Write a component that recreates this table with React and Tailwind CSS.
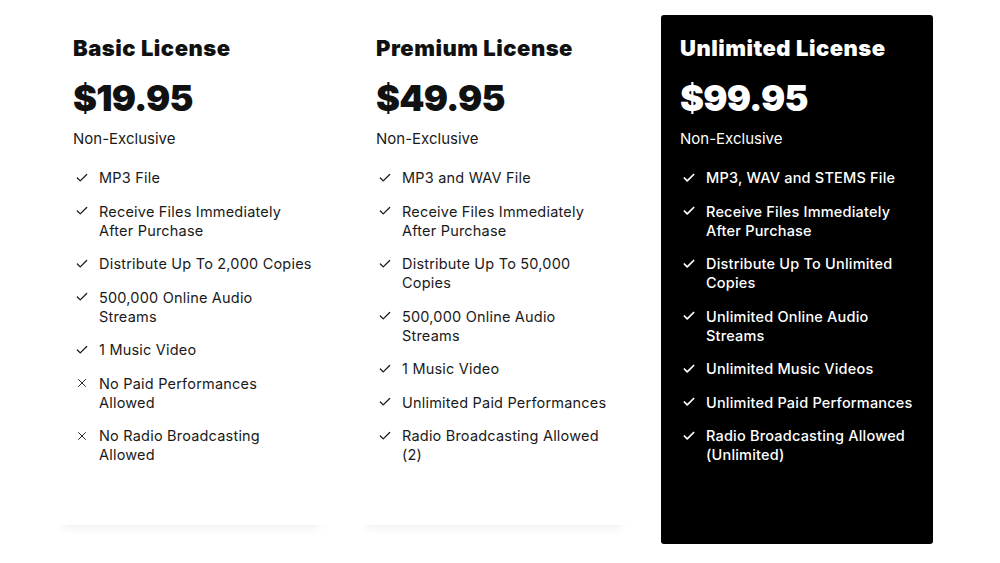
import { Check, X } from "lucide-react";

const plans = [
  {
    name: "Basic License",
    price: "$19.95",
    dark: false,
    items: [
      { ok: true, lines: ["MP3 File"] },
      { ok: true, lines: ["Receive Files Immediately", "After Purchase"] },
      { ok: true, lines: ["Distribute Up To 2,000 Copies"] },
      { ok: true, lines: ["500,000 Online Audio", "Streams"] },
      { ok: true, lines: ["1 Music Video"] },
      { ok: false, lines: ["No Paid Performances", "Allowed"] },
      { ok: false, lines: ["No Radio Broadcasting", "Allowed"] },
    ],
  },
  {
    name: "Premium License",
    price: "$49.95",
    dark: false,
    items: [
      { ok: true, lines: ["MP3 and WAV File"] },
      { ok: true, lines: ["Receive Files Immediately", "After Purchase"] },
      { ok: true, lines: ["Distribute Up To 50,000", "Copies"] },
      { ok: true, lines: ["500,000 Online Audio", "Streams"] },
      { ok: true, lines: ["1 Music Video"] },
      { ok: true, lines: ["Unlimited Paid Performances"] },
      { ok: true, lines: ["Radio Broadcasting Allowed", "(2)"] },
    ],
  },
  {
    name: "Unlimited License",
    price: "$99.95",
    dark: true,
    items: [
      { ok: true, lines: ["MP3, WAV and STEMS File"] },
      { ok: true, lines: ["Receive Files Immediately", "After Purchase"] },
      { ok: true, lines: ["Distribute Up To Unlimited", "Copies"] },
      { ok: true, lines: ["Unlimited Online Audio", "Streams"] },
      { ok: true, lines: ["Unlimited Music Videos"] },
      { ok: true, lines: ["Unlimited Paid Performances"] },
      { ok: true, lines: ["Radio Broadcasting Allowed", "(Unlimited)"] },
    ],
  },
];

function PlanCard({ plan }) {
  const dark = plan.dark;
  return (
    <div
      className={
        dark
          ? "w-[272px] h-[529px] bg-black text-white rounded-[3px] px-[19px] pt-[19px]"
          : "w-[272px] h-[510px] bg-white text-[#111] px-[18px] pt-[19px] shadow-[0_10px_10px_-8px_rgba(0,0,0,0.07)]"
      }
    >
      {/* Title + price */}
      <h2 className="text-[22px] leading-[28px] font-black tracking-[0.5px]">
        {plan.name}
      </h2>
      <p className="mt-[14px] text-[36px] leading-[44px] font-black tracking-[-0.8px]">
        {plan.price}
      </p>
      <p
        className={`mt-[9px] text-[15px] leading-[20px] ${
          dark ? "text-white" : "text-[#1a1a1a]"
        }`}
      >
        Non-Exclusive
      </p>

      {/* Features */}
      <ul
        className={`mt-[19px] flex flex-col gap-[14.5px] text-[14.5px] leading-[19px] tracking-[0.2px] ${
          dark ? "text-white font-medium" : "text-[#1a1a1a]"
        }`}
      >
        {plan.items.map((item, i) => (
          <li key={i} className="flex items-start">
            <span className="w-[26px] h-[19px] flex items-center pl-[2px] shrink-0">
              {item.ok ? (
                <Check size={14} strokeWidth={dark ? 3 : 2.2} />
              ) : (
                <X size={14} strokeWidth={1.6} />
              )}
            </span>
            <span className="whitespace-nowrap">
              {item.lines.map((line, j) => (
                <span key={j} className="block">
                  {line}
                </span>
              ))}
            </span>
          </li>
        ))}
      </ul>
    </div>
  );
}

export default function App() {
  return (
    <div className="min-h-screen w-full bg-white font-['Inter',sans-serif] pl-[55px] pt-[15px] flex gap-[31px] items-start">
      {plans.map((plan) => (
        <PlanCard key={plan.name} plan={plan} />
      ))}
    </div>
  );
}
